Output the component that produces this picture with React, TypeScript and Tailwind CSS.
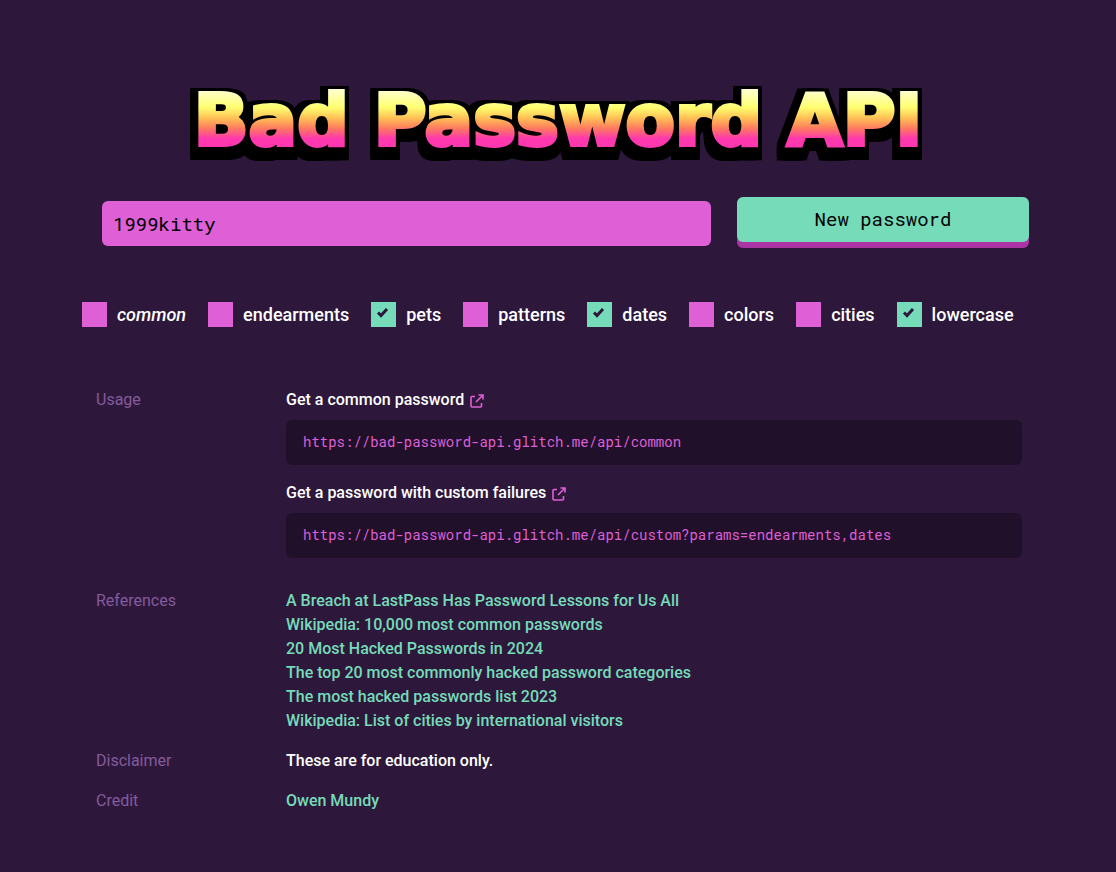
import { useState } from "react";

const categories = ["common", "endearments", "pets", "patterns", "dates", "colors", "cities", "lowercase"];

const references = [
  "A Breach at LastPass Has Password Lessons for Us All",
  "Wikipedia: 10,000 most common passwords",
  "20 Most Hacked Passwords in 2024",
  "The top 20 most commonly hacked password categories",
  "The most hacked passwords list 2023",
  "Wikipedia: List of cities by international visitors",
];

function ExternalIcon() {
  return (
    <svg viewBox="0 0 14 14" className="mt-0.5 h-3.5 w-3.5" fill="none" stroke="currentColor" strokeWidth="1.6" aria-hidden="true">
      <path d="M5 2.5H2Q1 2.5 1 3.5V12Q1 13 2 13H10.5Q11.5 13 11.5 12V9M8.5 1H13V5.5M13 1L6 8" />
    </svg>
  );
}

function Endpoint({ title, url }: { title: string; url: string }) {
  return (
    <div>
      <h2 className="flex items-center gap-1.5">
        {title}
        <a href={url} aria-label={title} className="text-[#df5fd6]">
          <ExternalIcon />
        </a>
      </h2>
      <pre className="mt-2 rounded-md bg-[#211029] px-[17px] py-3 text-sm leading-5 font-normal text-[#df5fd6]">
        <code className="font-['Roboto_Mono','Liberation_Mono',monospace]">{url}</code>
      </pre>
    </div>
  );
}

export default function App() {
  const [checked, setChecked] = useState<string[]>(["pets", "dates", "lowercase"]);
  const [password, setPassword] = useState("1999kitty");

  const toggle = (name: string) =>
    setChecked((list) => (list.includes(name) ? list.filter((item) => item !== name) : [...list, name]));

  const generate = () => setPassword(`${1950 + Math.floor(Math.random() * 70)}kitty`);

  return (
    <div className="min-h-screen bg-[#2d183b] px-4 pt-20 pb-14 font-['Roboto',sans-serif] text-base font-medium text-white">
      <main className="mx-auto w-full max-w-[952px]">
        <h1 className="text-center font-['DejaVu_Sans',sans-serif] text-[72px] leading-20 font-bold whitespace-nowrap [filter:drop-shadow(4px_0_0_#000)_drop-shadow(-8px_0_0_#000)_drop-shadow(0_-3px_0_#000)_drop-shadow(0_4px_0_#000)_drop-shadow(0_4px_0_#000)_drop-shadow(0_5px_0_#000)]">
          <span className="bg-clip-text text-transparent [-webkit-text-stroke:4px_transparent] [background-image:linear-gradient(to_bottom,#ffffc8_16%,#ffff70_35%,#ffbf55_48%,#ff7a60_60%,#ff38ae_72%)]">
            Bad Password API
          </span>
        </h1>

        <div className="mt-[37px] flex items-start gap-[26px] pr-[5px] pl-5">
          <input
            aria-label="Password"
            value={password}
            onChange={(event) => setPassword(event.target.value)}
            className="mt-1 h-[45px] min-w-0 flex-1 rounded-md bg-[#df5fd6] px-[11px] font-['Roboto_Mono','Liberation_Mono',monospace] text-[19px] font-normal text-black outline-none"
          />
          <button
            type="button"
            onClick={generate}
            className="h-[45px] w-[292px] rounded-md bg-[#75dbb9] font-['Roboto_Mono','Liberation_Mono',monospace] text-[19px] font-normal text-black shadow-[0_6px_0_#aa34a4]"
          >
            New password
          </button>
        </div>

        <div className="mt-14 flex flex-wrap gap-x-[22px] gap-y-3 text-lg leading-[25px]">
          {categories.map((name) => (
            <label key={name} className="flex items-center gap-2.5">
              <span className="relative flex">
                <input
                  type="checkbox"
                  checked={checked.includes(name)}
                  onChange={() => toggle(name)}
                  className="peer h-[25px] w-[25px] appearance-none bg-[#df5fd6] checked:bg-[#75dbb9]"
                />
                <svg viewBox="0 0 25 25" className="pointer-events-none absolute inset-0 hidden peer-checked:block" fill="none" stroke="#2d183b" strokeWidth="3" aria-hidden="true">
                  <path d="M7 10.5L10 13.5L16 7" />
                </svg>
              </span>
              <span className={name === "common" ? "italic" : ""}>{name}</span>
            </label>
          ))}
        </div>

        <dl className="mt-[61px] grid grid-cols-[190px_1fr] gap-y-4 pr-3 pl-[14px] leading-6 [&_dt]:font-normal [&_dt]:text-[#845a9c]">
          <dt>Usage</dt>
          <dd className="mb-[15px] flex flex-col gap-4">
            <Endpoint title="Get a common password" url="https://bad-password-api.glitch.me/api/common" />
            <Endpoint
              title="Get a password with custom failures"
              url="https://bad-password-api.glitch.me/api/custom?params=endearments,dates"
            />
          </dd>
          <dt>References</dt>
          <dd>
            <ul className="text-[#75dbb9]">
              {references.map((title) => (
                <li key={title}>
                  <a href="#references">{title}</a>
                </li>
              ))}
            </ul>
          </dd>
          <dt>Disclaimer</dt>
          <dd>These are for education only.</dd>
          <dt>Credit</dt>
          <dd>
            <a href="#credit" className="text-[#75dbb9]">
              Owen Mundy
            </a>
          </dd>
        </dl>
      </main>
    </div>
  );
}
